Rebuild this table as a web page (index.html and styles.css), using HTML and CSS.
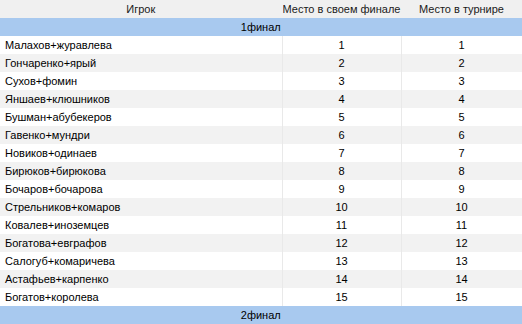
FILE: index.html
```html
<!DOCTYPE html>
<html lang="ru">
<head>
<meta charset="utf-8">
<link rel="stylesheet" href="styles.css">
</head>
<body>
<table class="grid">
  <colgroup>
    <col class="c-name">
    <col class="c-final">
    <col class="c-tour">
  </colgroup>
  <thead>
    <tr class="head">
      <th>Игрок</th>
      <th>Место в своем финале</th>
      <th>Место в турнире</th>
    </tr>
  </thead>
  <tbody>
    <tr class="group"><td colspan="3">1финал</td></tr>
    <tr><td class="name">Малахов+журавлева</td><td>1</td><td>1</td></tr>
    <tr><td class="name">Гончаренко+ярый</td><td>2</td><td>2</td></tr>
    <tr><td class="name">Сухов+фомин</td><td>3</td><td>3</td></tr>
    <tr><td class="name">Яншаев+клюшников</td><td>4</td><td>4</td></tr>
    <tr><td class="name">Бушман+абубекеров</td><td>5</td><td>5</td></tr>
    <tr><td class="name">Гавенко+мундри</td><td>6</td><td>6</td></tr>
    <tr><td class="name">Новиков+одинаев</td><td>7</td><td>7</td></tr>
    <tr><td class="name">Бирюков+бирюкова</td><td>8</td><td>8</td></tr>
    <tr><td class="name">Бочаров+бочарова</td><td>9</td><td>9</td></tr>
    <tr><td class="name">Стрельников+комаров</td><td>10</td><td>10</td></tr>
    <tr><td class="name">Ковалев+иноземцев</td><td>11</td><td>11</td></tr>
    <tr><td class="name">Богатова+евграфов</td><td>12</td><td>12</td></tr>
    <tr><td class="name">Салогуб+комаричева</td><td>13</td><td>13</td></tr>
    <tr><td class="name">Астафьев+карпенко</td><td>14</td><td>14</td></tr>
    <tr><td class="name">Богатов+королева</td><td>15</td><td>15</td></tr>
    <tr class="group"><td colspan="3">2финал</td></tr>
  </tbody>
</table>
</body>
</html>
```
FILE: styles.css
```css
html, body {
  margin: 0;
  padding: 0;
  background: #ffffff;
}
body {
  font-family: "Liberation Sans", Tahoma, sans-serif;
  font-size: 11px;
  color: #000;
}
.grid {
  width: 522px;
  border-collapse: collapse;
  table-layout: fixed;
}
.c-name { width: 282px; }
.c-final { width: 119px; }
.c-tour { width: 121px; }
.grid th,
.grid td {
  height: 18px;
  padding: 0;
  box-sizing: border-box;
  text-align: center;
  font-weight: normal;
  white-space: nowrap;
  overflow: hidden;
  border-left: 1px solid #e9e9e9;
  border-right: 1px solid #e9e9e9;
}
.grid th:first-child,
.grid td:first-child {
  border-left: none;
}
.head th {
  background: #f0f0f0;
  color: #1a1a1a;
  border-color: #f0f0f0;
}
.group td {
  background: #a8c9ef;
  border-color: #a8c9ef;
}
.grid tbody tr:nth-child(odd):not(.group) td {
  background: #f2f2f2;
}
.grid td.name {
  text-align: left;
  padding-left: 5px;
}
```
